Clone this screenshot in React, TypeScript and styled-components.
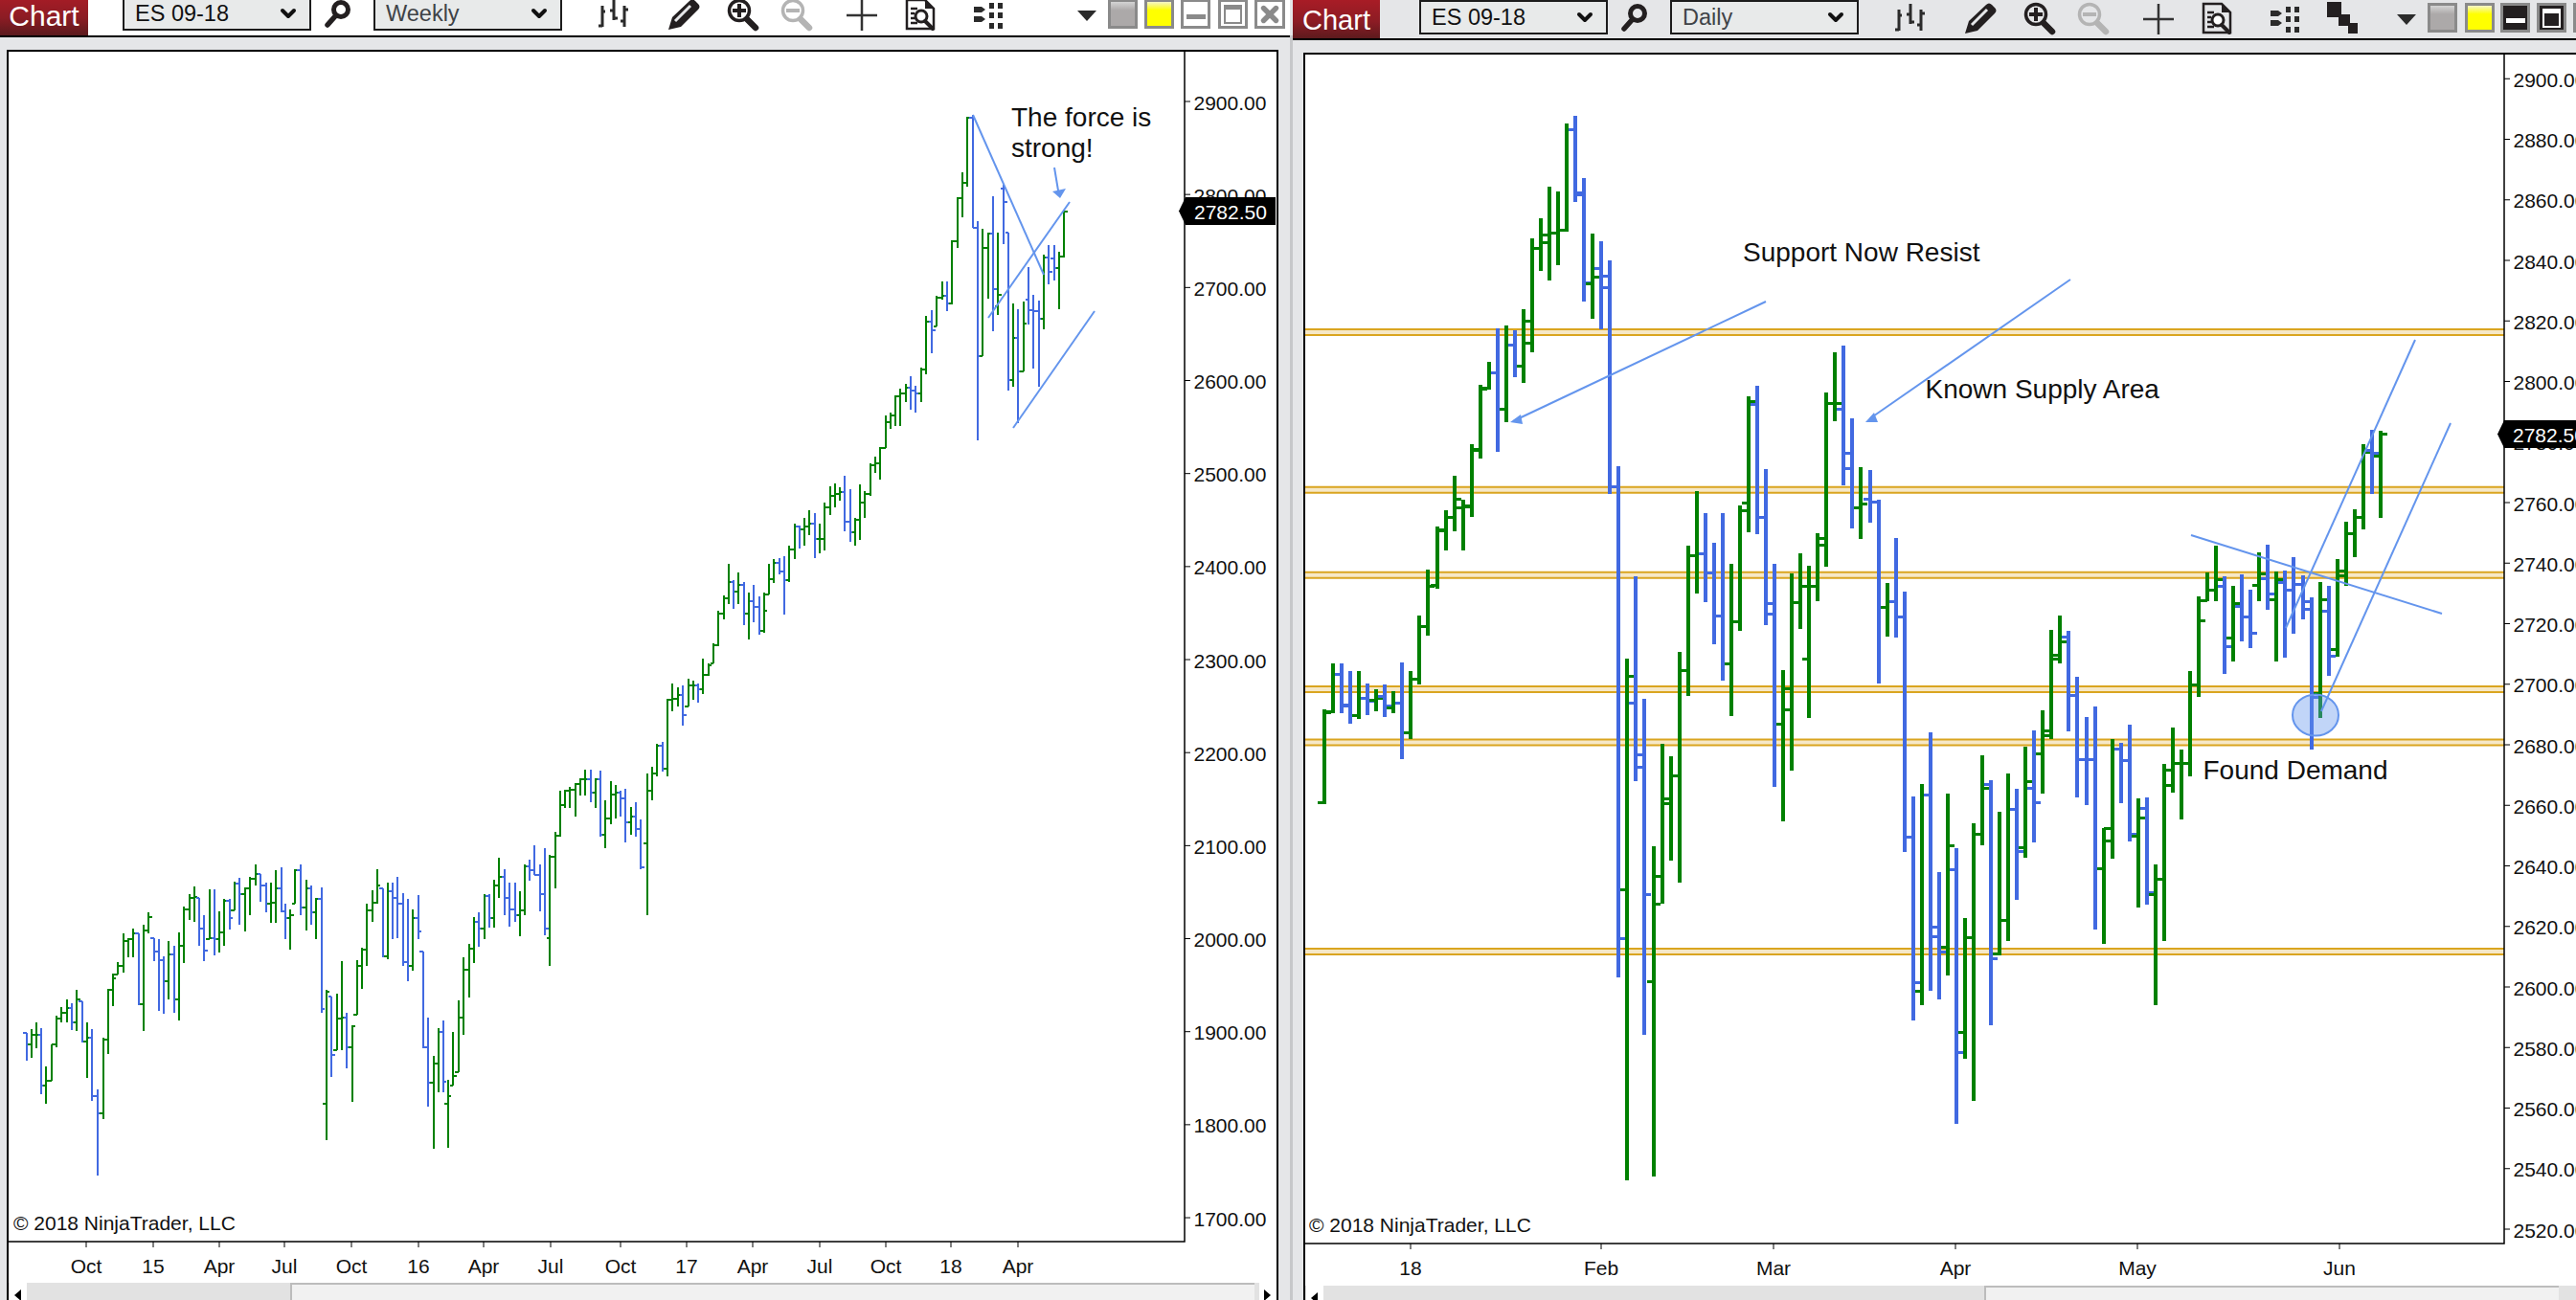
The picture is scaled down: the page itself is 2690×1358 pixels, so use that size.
import { ReactNode } from "react";
import styled, { createGlobalStyle } from "styled-components";
import { ChevronDown, X } from "lucide-react";

const GREEN = "#008000";
const BLUE = "#4169e1";
const NOTE = "#6495ed";
const GOLD = "#daa520";

type Bar = { x: number; hi: number; lo: number; o: number; c: number; color: string };

/* ---------- weekly chart data, traced as [x, high, low, close, open?] ---------- */

const weeklyLow: number[][] = [
	[28,1247,1292,1265],[36,1240,1288,1250],[44,1228,1272,1250],[52,1238,1348,1335],[60,1302,1364,1327],
	[69,1265,1327,1266],[77,1218,1270,1222],[85,1203,1228,1212],[94,1191,1228,1205],[102,1196,1242,1228],
	[110,1174,1243,1190],[119,1193,1262,1260],[127,1228,1322,1255],[135,1240,1360,1352],[144,1340,1485,1380],
	[153,1254,1390,1258],[161,1172,1282,1175],[169,1147,1202,1155],[177,1128,1148,1135],[186,1080,1146,1092],
	[194,1088,1120,1090],[202,1072,1120,1080],[211,1080,1200,1198],[219,1065,1243,1075],[228,1045,1080,1052],
	[236,1088,1127,1110],[244,1090,1210,1125],[252,1118,1215,1160],[260,1092,1190,1115],[269,1100,1213,1190],
	[277,1078,1226,1100],[286,1035,1130,1040],[294,1015,1057,1020],[302,1001,1060,1019],[311,1020,1100,1072],
	[319,1050,1126,1108],[327,1006,1090,1088],[336,1006,1117,1090],[344,1043,1112,1078],[352,1023,1100,1025],
	[360,1022,1073,1055],[368,993,1042,996],[376,987,1066,1015],[385,1003,1077,1005],[394,985,1050,988],
	[403,965,1000,980],[411,980,1027,1000],[420,995,1045,1030],[428,995,1063,1028],[436,975,1063,1005],
	[445,970,1045,1043],[452,1030,1090,1055],[460,1040,1107,1050],[468,972,1030,975],[476,964,1050,1037],
	[486,990,1075,1005],[494,1000,1065,1045],[502,1020,1090,1022],[511,1003,1213,1207],[519,1175,1425,1178,1364],
	[527,1185,1320,1283],[536,1180,1275,1222],[544,1126,1275,1220],[552,1212,1306,1270],[561,1233,1362,1235],
	[569,1125,1216,1135],[577,1104,1173,1107],[585,1030,1135,1042],[594,1008,1060,1028],[602,973,1030,1000],
	[611,1005,1120,1118],[619,995,1123,1010],[627,995,1090,1020],[635,985,1088,1030],[644,1012,1135,1128],
	[652,1022,1160,1135],[660,1040,1143,1055],[669,1016,1090,1076],[677,1110,1272,1270],[685,1220,1370,1330],
	[694,1285,1440,1298],[702,1238,1345,1245],[710,1226,1345,1328],[718,1325,1438,1352,1364],[726,1245,1335,1318],
	[735,1192,1312,1220],[744,1120,1250,1140],[752,1098,1187,1105],[760,1052,1130,1060],[768,1044,1102,1072],
	[777,1015,1090,1018],[785,1015,1070,1055],[794,990,1070,1000],[802,954,1020,985],[811,972,1050,1020],
	[819,995,1068,1040],[828,995,1060,1050],[836,1010,1085,1042],[844,965,1050,968],[852,957,992,975],
	[860,932,982,982],[868,965,1043,1014],[877,938,1083,1072],[885,948,1135,952,1088],[893,910,1005,917],
	[901,842,918,865],[910,840,870,842],[918,835,870,840],[926,828,885,830],[935,820,850,823],
	[943,806,850,822],[951,806,860,845],[960,820,870,822],[968,808,918,915],[976,858,938,888],
	[984,825,898,848],[993,832,888,845],[1001,842,885,855],[1009,838,928,895],[1018,868,915,885],
	[1026,860,918,905],[1034,890,972,970],[1044,812,1050,842,930],[1052,802,858,812],[1060,763,818,766],
	[1069,760,810,805],[1077,688,818,690],[1085,662,708,688],[1094,668,700,682],[1103,665,732,715],
	[1111,655,700,665],[1119,657,690,665],[1128,662,695,672],[1136,620,680,648],[1144,628,650,632],
	[1153,595,628,598],[1161,540,600,545],[1169,515,555,520],[1177,462,530,492],[1186,490,538,508],
	[1193,476,530,498],[1202,492,565,545],[1210,510,588,525],[1218,497,560,535],[1227,517,580,575],
	[1235,510,578,540],[1243,463,513,488],[1252,455,495,460],[1260,452,480,475],[1268,450,547,490],
	[1277,432,492,438],[1285,395,455,400],[1293,398,436,405],[1301,385,432,400],[1310,373,415,395],
	[1318,378,452,420],[1327,395,445,420],[1335,360,440,368],[1343,333,380,348],[1352,328,368,346],
	[1360,335,357,342],[1368,315,408,392],[1376,337,425,410],[1385,385,432,388],[1393,330,422,360],
	[1401,340,385,345],[1410,295,348,297],[1418,283,310,295],[1426,267,322,268],[1435,215,268,225],
	[1443,210,237,215],[1451,180,232,182],[1459,170,232,178],[1468,162,192,168],[1476,148,205,172],
	[1484,165,210,178],[1493,135,192,138],[1501,48,145,58],[1510,38,110,72],[1518,15,65,18],
];

const weeklyHigh: number[][] = [
	[71,583,640,628],[87,582,674,650],[103,452,655,455],[119,318,476,320],[135,240,380,272],[150,65,285,68],
	[167,60,415,415],[183,392,1080,815],[198,418,815,478],[215,430,635,432],[231,315,737,607],[247,430,687,625,660],
	[264,280,465,332,290],[279,428,925,890],[294,650,912,758],[310,670,1025,865],[326,645,865,715],[342,537,717,672,640],
	[358,625,855,675],[374,642,912,700],[390,497,733,508],[406,468,592,553],[422,468,580,540,510],[438,490,668,505],[454,360,508,362],
];

const buildWeekly = (): Bar[] => {
	const rows = [
		...weeklyLow.map((r) => ({ r, x: 10 + r[0] / 1.568, y: (v: number) => 300 + v / 1.6 })),
		...weeklyHigh.map((r) => ({ r, x: 960 + r[0] / 3, y: (v: number) => 100 + v / 3 })),
	];
	let prev = rows[0].y(1247);
	return rows.map(({ r, x, y }) => {
		const hi = y(r[1]);
		const lo = y(r[2]);
		const c = y(r[3]);
		const o = r[4] !== undefined ? y(r[4]) : Math.min(lo, Math.max(hi, prev));
		prev = c;
		return { x, hi, lo, o, c, color: c <= o ? GREEN : BLUE };
	});
};

/* ---------- daily chart data, [high, low, open, close, colour] ---------- */

type Row = [number, number, number, number, string];
const g = GREEN;
const b = BLUE;

const dailyA: Row[] = [
	[838,967,965,842,g],[775,843,841,790,g],[775,843,790,833,b],[785,857,832,846,b],[785,851,846,822,g],
	[802,845,822,826,b],[810,840,825,822,g],[804,848,820,833,b],[813,843,835,829,g],[774,906,829,870,b],
	[785,878,870,796,g],[709,803,797,724,g],[647,737,724,670,g],[588,673,669,594,g],[566,621,592,576,g],
	[519,595,576,551,g],[552,621,562,560,g],[476,575,561,484,g],[395,495,483,400,g],[363,401,399,378,g],
	[318,486,378,428,b],[314,446,428,340,g],[320,384,340,369,b],[291,392,369,308,g],[195,350,338,208,g],
	[167,239,208,190,g],[124,252,200,188,g],[131,231,187,183,g],[38,186,183,46,g],[27,145,46,135,b],
	[112,281,133,256,b],[188,304,257,248,g],[199,319,236,246,b],[225,544,262,534,b],[506,1203,534,1150,b],
	[768,1480,1084,793,g],[656,936,829,900,b],[823,1282,917,1090,b],[1024,1475,1210,1104,g],[885,1103,1066,960,g],
	[902,1044,966,928,g],[759,1074,928,785,g],[614,819,785,628,g],[540,679,628,625,g],[570,691,625,652,b],
	[610,749,652,710,b],[570,798,710,775,b],[639,847,775,718,g],[559,730,718,566,g],[410,596,556,418,g],
	[396,598,422,575,b],[510,723,575,708,b],[639,943,693,858,b],
];

const dailyB: Row[] = [
	[646,938,750,682,g],[459,840,722,515,g],[421,567,515,484,g],[445,738,625,484,g],[382,513,484,392,g],
	[111,447,405,132,g],[33,166,132,132,g],[20,290,143,258,b],[160,373,227,333,b],[255,393,333,325,g],
	[260,362,316,322,b],[317,671,322,524,b],[478,581,524,514,g],[391,583,514,543,b],[494,996,543,968,b],
	[889,1321,968,1248,b],[865,1291,1265,887,g],[766,1264,887,1142,b],[1035,1280,1160,1190,b],[884,1234,1180,985,g],
	[989,1520,1030,1382,b],[1123,1395,1345,1161,g],[941,1476,1161,963,g],[810,983,963,873,g],[858,1330,866,1202,b],
	[919,1195,1192,1128,g],[845,1167,1128,915,g],[874,1088,915,995,b],[793,1007,988,860,g],[762,978,873,902,b],
	[723,884,807,762,g],[568,778,772,625,g],[540,633,618,592,g],[570,764,582,695,b],[659,891,695,818,b],
	[736,906,818,818,b],[716,1146,818,1029,b],[950,1173,1029,952,g],[778,1009,975,798,g],[786,902,798,820,b],
	[751,976,820,962,b],[893,1103,965,930,g],[891,1098,912,1075,b],[1020,1291,1078,1049,g],[826,1168,1049,868,g],
	[756,882,838,826,g],[799,933,826,826,g],[647,850,826,675,g],[503,697,675,550,g],
];

const dailyC: Row[] = [
	[595,683,740,650,g],[510,683,650,615,g],[606,912,637,825,b],[636,872,800,690,g],[600,810,700,732,b],
	[648,830,732,785,b],[532,683,635,597,g],[507,710,612,662,b],[592,872,678,617,g],[588,860,626,650,b],
	[546,785,650,632,b],[604,740,632,708,b],[672,1150,686,985,b],[624,1050,972,678,g],[636,917,716,856,b],
	[552,857,836,605,g],[435,637,588,472,g],[396,545,472,420,g],[192,458,420,218,g],[147,347,210,220,b],[150,422,230,160,g],
];

const buildDaily = (): Bar[] => {
	const scale = (rows: Row[], top: number, k: number) =>
		rows.map(([hi, lo, o, c, color]) => ({
			hi: top + hi / k,
			lo: top + lo / k,
			o: top + Math.min(lo, Math.max(hi, o)) / k,
			c: top + c / k,
			color,
		}));
	return [
		...scale(dailyA, 100, 1.3067),
		...scale(dailyB, 350, 1.845),
		...scale(dailyC, 400, 3),
	].map((bar, i) => ({ ...bar, x: 1383 + i * 9.04 }));
};

const weeklyBars = buildWeekly();
const dailyBars = buildDaily();

const weeklyTicks: [number, string][] = [
	[90, "Oct"], [160, "15"], [229, "Apr"], [297, "Jul"], [367, "Oct"], [437, "16"], [505, "Apr"], [575, "Jul"],
	[648, "Oct"], [717, "17"], [786, "Apr"], [856, "Jul"], [925, "Oct"], [993, "18"], [1063, "Apr"],
];
const dailyTicks: [number, string][] = [
	[1473, "18"], [1672, "Feb"], [1852, "Mar"], [2042, "Apr"], [2232, "May"], [2443, "Jun"],
];
const weeklyPrices = Array.from({ length: 13 }, (_, i) => 2900 - i * 100);
const dailyPrices = Array.from({ length: 20 }, (_, i) => 2900 - i * 20);
const supplyLines = [347, 511.7, 600.8, 720, 775.5, 994];

/* ---------- page ---------- */

const GlobalStyle = createGlobalStyle`
	html, body {
		margin: 0;
		width: 2690px;
		height: 1358px;
		overflow: hidden;
		background: #e5e6e8;
		font-family: "Liberation Sans", Arial, sans-serif;
	}
`;

const Screen = styled.div`
	display: flex;
	width: 2690px;
	height: 1358px;
	overflow: hidden;
`;

const Window = styled.section<{ $width: number }>`
	display: flex;
	flex-direction: column;
	flex: 0 0 ${(p) => p.$width}px;
	width: ${(p) => p.$width}px;
	height: 100%;
	background: #e5e6e8;
`;

const Divider = styled.div`
	flex: 0 0 3px;
	margin-top: 37px;
	background: #c6c7c9;
`;

const Toolbar = styled.header<{ $height: number; $bg: string }>`
	flex: 0 0 ${(p) => p.$height}px;
	height: ${(p) => p.$height}px;
	box-sizing: border-box;
	overflow: hidden;
	background: ${(p) => p.$bg};
	border-bottom: 2px solid #000;
`;

const ToolRow = styled.div<{ $shift: number }>`
	display: flex;
	align-items: flex-start;
	height: 41px;
	margin-top: ${(p) => p.$shift}px;
`;

const ChartTab = styled.div<{ $width: number; $size: number }>`
	flex: 0 0 ${(p) => p.$width}px;
	height: 41px;
	display: flex;
	align-items: flex-end;
	justify-content: center;
	padding-bottom: 5px;
	box-sizing: border-box;
	color: #fff;
	font-size: ${(p) => p.$size}px;
	line-height: 1;
	background: linear-gradient(180deg, #a81c26 0%, #8c1c24 55%, #5b1a1d 100%);
`;

const Combo = styled.div<{ $gap: number; $muted?: boolean }>`
	flex: 0 0 197px;
	height: 36px;
	margin-left: ${(p) => p.$gap}px;
	box-sizing: border-box;
	display: flex;
	align-items: center;
	justify-content: space-between;
	padding: 0 10px 0 11px;
	background: #e8eaea;
	border: 2px solid #1c1c1c;
	font-size: 23.5px;
	color: ${(p) => (p.$muted ? "#3f4347" : "#111")};
`;

const IconSlot = styled.div<{ $gap: number }>`
	flex: 0 0 40px;
	height: 36px;
	margin-left: ${(p) => p.$gap}px;
	margin-top: 1px;
	display: flex;
	justify-content: center;
`;

const WindowBox = styled.div<{ $gap: number; $fill: string }>`
	flex: 0 0 31px;
	height: 31px;
	box-sizing: border-box;
	margin: 3px 0 0 ${(p) => p.$gap}px;
	border: 3px solid #8a8a8a;
	background: ${(p) => p.$fill};
	display: flex;
	align-items: center;
	justify-content: center;
`;

const MinBar = styled.span<{ $color: string }>`
	display: block;
	width: 20px;
	height: 5px;
	margin-top: 6px;
	background: ${(p) => p.$color};
`;

const MaxFrame = styled.span<{ $color: string; $fill: string }>`
	display: block;
	width: 19px;
	height: 20px;
	box-sizing: border-box;
	border: 2px solid ${(p) => p.$color};
	border-top-width: 5px;
	background: ${(p) => p.$fill};
`;

const Body = styled.div<{ $left: number; $right: number }>`
	flex: 1;
	min-height: 0;
	padding: 13px ${(p) => p.$right}px 0 ${(p) => p.$left}px;
	display: flex;
`;

const ChartFrame = styled.div<{ $open?: boolean }>`
	flex: 1;
	min-width: 0;
	display: flex;
	flex-direction: column;
	overflow: hidden;
	background: #fff;
	border-top: 2px solid #000;
	border-left: 2px solid #000;
	border-right: ${(p) => (p.$open ? "none" : "2px solid #000")};
`;

const PlotSvg = styled.svg`
	display: block;
	flex: 0 0 1286px;
	width: 100%;
	height: 1286px;
	font-family: "Liberation Sans", Arial, sans-serif;
`;

const ScrollBar = styled.div`
	flex: 1;
	display: flex;
	min-height: 0;
	padding-left: 1px;
	background: #e2e2e2;
`;

const ScrollButton = styled.div<{ $flip?: boolean }>`
	flex: 0 0 18px;
	height: 100%;
	background: #fff;
	position: relative;

	&::after {
		content: "";
		position: absolute;
		top: 7px;
		left: 5px;
		border-style: solid;
		border-width: 6px ${(p) => (p.$flip ? "0" : "7px")} 6px ${(p) => (p.$flip ? "7px" : "0")};
		border-color: transparent ${(p) => (p.$flip ? "transparent" : "#000")} transparent ${(p) => (p.$flip ? "#000" : "transparent")};
	}
`;

const ScrollTrack = styled.div<{ $before: number; $width: number }>`
	flex: 1;
	padding-left: ${(p) => p.$before}px;

	&::before {
		content: "";
		display: block;
		box-sizing: border-box;
		width: ${(p) => p.$width}px;
		height: 100%;
		background: #f1f1f1;
		border-top: 2px solid #bcbcbc;
		border-left: 2px solid #bcbcbc;
	}
`;

/* ---------- toolbar icons ---------- */

const Icon = ({ children }: { children: ReactNode }) => (
	<svg width="36" height="36" viewBox="0 0 36 36">
		{children}
	</svg>
);

const SearchIcon = () => (
	<Icon>
		<circle cx="20" cy="13" r="7.5" fill="none" stroke="#231f20" strokeWidth="5" />
		<path d="M14 20L6 29" stroke="#231f20" strokeWidth="5.5" strokeLinecap="round" />
	</Icon>
);

const BarsIcon = () => (
	<Icon>
		<g stroke="#2b2b2b" strokeWidth="3" fill="none">
			<path d="M7 9V31M3 30H7M7 15H10" />
			<path d="M19 3V24M15 14H19M19 22H23" />
			<path d="M30 9V31M26 25H30M30 13H34" />
		</g>
	</Icon>
);

const PencilIcon = () => (
	<Icon>
		<path d="M2 34L6 21L24 4Q27 1 30 4L33 7Q36 10 33 13L15 31Z" fill="#231f20" />
		<path d="M9 25L25 9" stroke="#e5e6e8" strokeWidth="3" />
		<path d="M12 29L28 13" stroke="#231f20" strokeWidth="1" />
	</Icon>
);

const ZoomIcon = ({ plus, color }: { plus?: boolean; color: string }) => (
	<Icon>
		<circle cx="14" cy="14" r="10.5" fill="none" stroke={color} strokeWidth="3.5" />
		<path d={plus ? "M14 7V21M7 14H21" : "M7 14H21"} stroke={color} strokeWidth="4" />
		<path d="M22 23L31 32" stroke={color} strokeWidth="6.5" strokeLinecap="round" />
	</Icon>
);

const CrossIcon = () => (
	<Icon>
		<path d="M18 3V35M2 19H34" stroke="#333" strokeWidth="2.5" />
	</Icon>
);

const DocIcon = () => (
	<Icon>
		<path d="M4 3H23L32 12V33H4Z" fill="none" stroke="#231f20" strokeWidth="2.5" />
		<path d="M23 3V12H32" fill="#231f20" />
		<path d="M8 12H15M8 17H12M8 22H12M8 27H15" stroke="#231f20" strokeWidth="2.5" />
		<circle cx="19" cy="20" r="6" fill="#fff" stroke="#231f20" strokeWidth="3" />
		<path d="M23 25L31 33" stroke="#231f20" strokeWidth="4" strokeLinecap="round" />
	</Icon>
);

const ColumnsIcon = () => (
	<Icon>
		<g fill="#2b2b2b">
			<path d="M5 10H13L17 13L13 16H5Z" />
			<path d="M5 20H13L17 23L13 26H5Z" />
			<rect x="21" y="6" width="5" height="6" />
			<rect x="30" y="6" width="5" height="6" />
			<rect x="21" y="16" width="5" height="6" />
			<rect x="30" y="16" width="5" height="6" />
			<rect x="21" y="27" width="5" height="6" />
			<rect x="30" y="27" width="5" height="6" />
		</g>
	</Icon>
);

const StackIcon = () => (
	<Icon>
		<g fill="#231f20">
			<rect x="3" y="1" width="15" height="16" />
			<rect x="15" y="14" width="12" height="12" />
			<rect x="25" y="23" width="10" height="11" />
		</g>
	</Icon>
);

const MenuIcon = () => (
	<Icon>
		<path d="M8 14H28L18 25Z" fill="#2b2b2b" />
	</Icon>
);

/* ---------- toolbar ---------- */

const GRAY_BOX = "linear-gradient(180deg, #d4d4d4 0%, #aca9a9 35%, #aca9a9 100%)";
const YELLOW_BOX = "linear-gradient(180deg, #f6f6c8 0%, #ffff00 35%, #ffff00 100%)";

const Tools = ({ first }: { first: number }) => (
	<>
		<IconSlot $gap={first}><BarsIcon /></IconSlot>
		<IconSlot $gap={34}><PencilIcon /></IconSlot>
		<IconSlot $gap={22}><ZoomIcon plus color="#231f20" /></IconSlot>
		<IconSlot $gap={16}><ZoomIcon color="#b4b4b4" /></IconSlot>
		<IconSlot $gap={28}><CrossIcon /></IconSlot>
		<IconSlot $gap={21}><DocIcon /></IconSlot>
		<IconSlot $gap={29}><ColumnsIcon /></IconSlot>
	</>
);

const LeftToolbar = () => (
	<Toolbar $height={39} $bg="#fff">
		<ToolRow $shift={-4}>
			<ChartTab $width={92} $size={30}>Chart</ChartTab>
			<Combo $gap={36}>ES 09-18<ChevronDown size={24} strokeWidth={4} color="#111" /></Combo>
			<IconSlot $gap={9}><SearchIcon /></IconSlot>
			<Combo $gap={16} $muted>Weekly<ChevronDown size={24} strokeWidth={4} color="#111" /></Combo>
			<Tools first={33} />
			<IconSlot $gap={65}><MenuIcon /></IconSlot>
			<WindowBox $gap={2} $fill={GRAY_BOX} />
			<WindowBox $gap={7} $fill={YELLOW_BOX} />
			<WindowBox $gap={7} $fill="#fff"><MinBar $color="#8a8a8a" /></WindowBox>
			<WindowBox $gap={8} $fill="#fff"><MaxFrame $color="#8a8a8a" $fill="#fff" /></WindowBox>
			<WindowBox $gap={7} $fill="#fff"><X size={26} strokeWidth={5} color="#8a8a8a" /></WindowBox>
		</ToolRow>
	</Toolbar>
);

const RightToolbar = () => (
	<Toolbar $height={42} $bg="#e5e6e8">
		<ToolRow $shift={0}>
			<ChartTab $width={91} $size={29}>Chart</ChartTab>
			<Combo $gap={41}>ES 09-18<ChevronDown size={24} strokeWidth={4} color="#111" /></Combo>
			<IconSlot $gap={9}><SearchIcon /></IconSlot>
			<Combo $gap={16} $muted>Daily<ChevronDown size={24} strokeWidth={4} color="#111" /></Combo>
			<Tools first={33} />
			<IconSlot $gap={21}><StackIcon /></IconSlot>
			<IconSlot $gap={28}><MenuIcon /></IconSlot>
			<WindowBox $gap={2} $fill={GRAY_BOX} />
			<WindowBox $gap={8} $fill={YELLOW_BOX} />
			<WindowBox $gap={6} $fill="#231f20"><MinBar $color="#fff" /></WindowBox>
			<WindowBox $gap={7} $fill="#231f20"><MaxFrame $color="#fff" $fill="#231f20" /></WindowBox>
			<WindowBox $gap={7} $fill="#8c1c24" />
		</ToolRow>
	</Toolbar>
);

/* ---------- chart drawing ---------- */

const OhlcBars = ({ bars, width, tick, tickWidth }: { bars: Bar[]; width: number; tick: number; tickWidth: number }) => (
	<g shapeRendering="crispEdges">
		{bars.map((bar, i) => (
			<g key={i} stroke={bar.color}>
				<line x1={bar.x} x2={bar.x} y1={bar.hi} y2={bar.lo} strokeWidth={width} />
				<line x1={bar.x - tick} x2={bar.x} y1={bar.o} y2={bar.o} strokeWidth={tickWidth} />
				<line x1={bar.x} x2={bar.x + tick} y1={bar.c} y2={bar.c} strokeWidth={tickWidth} />
			</g>
		))}
	</g>
);

const NoteLine = ({ d }: { d: string }) => <path d={d} fill="none" stroke={NOTE} strokeWidth="2" />;

const Label = styled.text`
	font-size: 21px;
	fill: #111;
`;

const Note = styled.text`
	font-size: 28px;
	fill: #111;
`;

const Axes = ({
	plotRight,
	plotBottom,
	left,
	top,
	ticks,
	prices,
	priceY,
}: {
	plotRight: number;
	plotBottom: number;
	left: number;
	top: number;
	ticks: [number, string][];
	prices: number[];
	priceY: (p: number) => number;
}) => (
	<g>
		<path d={`M${plotRight} ${top}V${plotBottom}H${left}`} fill="none" stroke="#000" strokeWidth="1.5" />
		{ticks.map(([x, text]) => (
			<g key={x}>
				<path d={`M${x} ${plotBottom}v6`} stroke="#000" strokeWidth="1" />
				<Label x={x} y={plotBottom + 33} textAnchor="middle">{text}</Label>
			</g>
		))}
		{prices.map((p) => (
			<g key={p}>
				<path d={`M${plotRight} ${priceY(p)}h6`} stroke="#000" strokeWidth="1" />
				<Label x={plotRight + 9.5} y={priceY(p) + 8.5}>{p.toFixed(2)}</Label>
			</g>
		))}
	</g>
);

const PriceTag = ({ x, y, width }: { x: number; y: number; width: number }) => (
	<g>
		<path d={`M${x} ${y}L${x + 7} ${y - 14.5}H${x + width}V${y + 14.5}H${x + 7}Z`} fill="#000" />
		<Label x={x + 16} y={y + 8} style={{ fill: "#fff" }}>2782.50</Label>
	</g>
);

const weeklyY = (p: number) => 106 + (2900 - p) * 0.9717;
const dailyY = (p: number) => 525 + (2760 - p) * 3.1625;

const WeeklyChart = () => (
	<PlotSvg viewBox="9 54 1324 1286" preserveAspectRatio="xMinYMin">
		<Axes plotRight={1237} plotBottom={1297} left={9} top={54} ticks={weeklyTicks} prices={weeklyPrices} priceY={weeklyY} />
		<OhlcBars bars={weeklyBars} width={2} tick={3.5} tickWidth={2} />
		<NoteLine d="M1016 120L1090 287" />
		<NoteLine d="M1032 332L1117 211" />
		<NoteLine d="M1058 447L1143 325" />
		<NoteLine d="M1101 175L1105.5 202" />
		<path d="M1099 200L1113 197L1107 207Z" fill={NOTE} />
		<Note x={1056} y={131.5}>The force is</Note>
		<Note x={1056} y={163.5}>strong!</Note>
		<Label x={14} y={1285}>© 2018 NinjaTrader, LLC</Label>
		<PriceTag x={1231} y={220.5} width={101} />
	</PlotSvg>
);

const DailyChart = () => (
	<PlotSvg viewBox="1363 57 1327 1286" preserveAspectRatio="xMinYMin">
		{supplyLines.map((y) => (
			<g key={y}>
				<rect x={1363} y={y - 3} width={1252} height={6} fill={GOLD} opacity={0.25} />
				<path d={`M1363 ${y - 3}H2615M1363 ${y + 3}H2615`} stroke={GOLD} strokeWidth="2" />
			</g>
		))}
		<Axes plotRight={2615} plotBottom={1299} left={1363} top={57} ticks={dailyTicks} prices={dailyPrices} priceY={dailyY} />
		<OhlcBars bars={dailyBars} width={4} tick={7} tickWidth={3} />
		<NoteLine d="M1844 315L1581 439.5" />
		<path d="M1577 441L1588 433L1590 443Z" fill={NOTE} />
		<NoteLine d="M2162 292L1953 437" />
		<path d="M1948 441L1957 431L1961 441Z" fill={NOTE} />
		<NoteLine d="M2288 559L2550 641" />
		<NoteLine d="M2387 656L2522 355" />
		<NoteLine d="M2424 743L2559 442" />
		<ellipse cx="2418" cy="747" rx="24" ry="21.5" fill={NOTE} fillOpacity="0.4" stroke={NOTE} strokeWidth="2" />
		<Note x={1820} y={273}>Support Now Resist</Note>
		<Note x={2010.5} y={416}>Known Supply Area</Note>
		<Note x={2300.5} y={814}>Found Demand</Note>
		<Label x={1367} y={1287}>© 2018 NinjaTrader, LLC</Label>
		<PriceTag x={2608} y={453.5} width={90} />
	</PlotSvg>
);

export default function App() {
	return (
		<Screen>
			<GlobalStyle />
			<Window $width={1347}>
				<LeftToolbar />
				<Body $left={7} $right={12}>
					<ChartFrame>
						<WeeklyChart />
						<ScrollBar>
							<ScrollButton />
							<ScrollTrack $before={275} $width={1007} />
							<ScrollButton $flip />
						</ScrollBar>
					</ChartFrame>
				</Body>
			</Window>
			<Divider />
			<Window $width={1340}>
				<RightToolbar />
				<Body $left={11} $right={0}>
					<ChartFrame $open>
						<DailyChart />
						<ScrollBar>
							<ScrollButton />
							<ScrollTrack $before={690} $width={600} />
						</ScrollBar>
					</ChartFrame>
				</Body>
			</Window>
		</Screen>
	);
}
